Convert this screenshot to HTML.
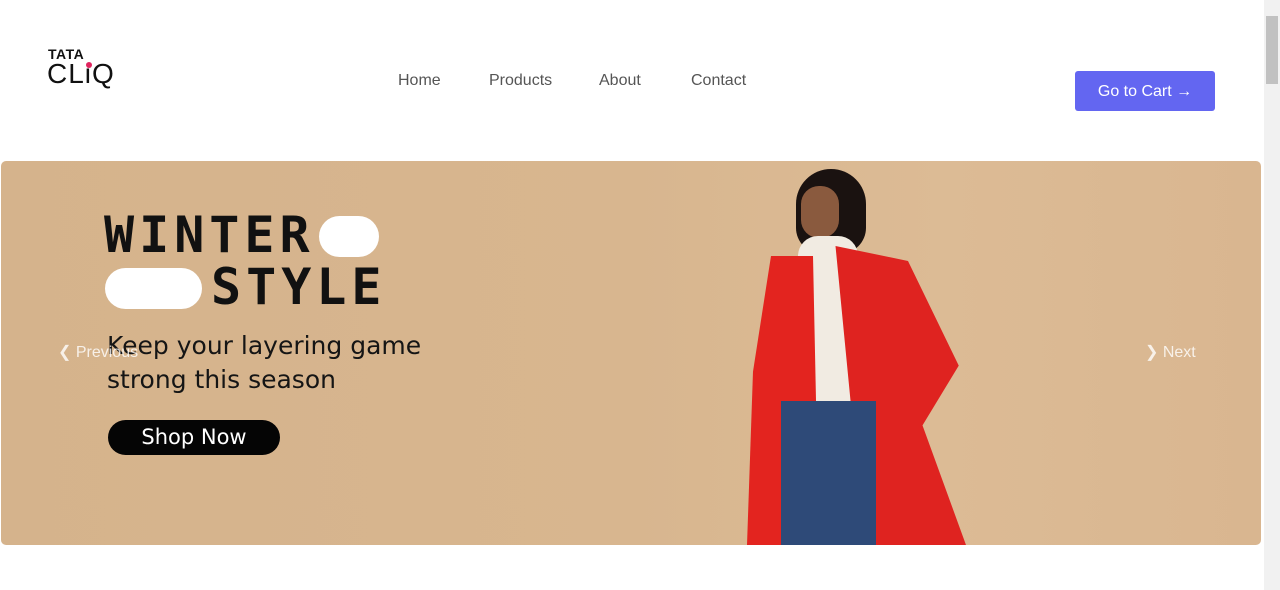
<!DOCTYPE html>
<html><head><style>
body{margin:0;width:1280px;height:590px;overflow:hidden;background:#fff;font-family:"Liberation Sans",sans-serif;position:relative}
.nav a{position:absolute;top:72px;font-size:16px;color:#555;text-decoration:none}
.btn{position:absolute;left:1075px;top:71px;width:140px;height:40px;background:#6366f1;border-radius:3px;color:#fff;font-size:16px;line-height:42px;text-align:center}
.banner{position:absolute;left:1px;top:161px;width:1260px;height:384px;border-radius:5px;overflow:hidden;background:linear-gradient(90deg,#d5b38c 0%,#d8b68f 50%,#dcbb95 75%,#d9b690 100%)}
.mono{font-family:"DejaVu Sans Mono","Liberation Mono",monospace;font-weight:bold;color:#111;position:absolute;font-size:50px;letter-spacing:5px}
.pill{position:absolute;background:#fff;border-radius:22px}
.sub{position:absolute;left:106px;top:168px;font-family:"DejaVu Sans",sans-serif;font-size:25px;line-height:34px;color:#151515}
.shop{position:absolute;left:107px;top:259px;width:172px;height:35px;border-radius:18px;background:#050505;color:#fff;font-family:"DejaVu Sans",sans-serif;font-size:21px;line-height:35px;text-align:center}
.ctl{position:absolute;top:181px;color:rgba(255,255,255,.8);font-size:16px}
.sb{position:absolute;right:0;top:0;width:16px;height:590px;background:#f1f1f1}
.sb div{position:absolute;left:2px;top:16px;width:12px;height:68px;background:#c1c1c1}
</style></head><body>
<div style="position:absolute;left:48px;top:46px;font-weight:900;font-size:14px;letter-spacing:.5px;color:#111">TATA</div>
<div style="position:absolute;left:47px;top:58px;font-size:28px;color:#111;letter-spacing:1px">CLiQ</div>
<div style="position:absolute;left:86px;top:62px;width:6px;height:6px;border-radius:50%;background:#e0245e"></div>
<div class="nav"><a style="left:398px">Home</a><a style="left:489px">Products</a><a style="left:599px">About</a><a style="left:691px">Contact</a></div>
<div class="btn">Go to Cart →</div>
<div class="banner">
 <div class="mono" style="left:103px;top:45px">WINTER</div>
 <div class="pill" style="left:318px;top:55px;width:60px;height:41px"></div>
 <div class="pill" style="left:104px;top:107px;width:97px;height:41px"></div>
 <div class="mono" style="left:210px;top:97px">STYLE</div>
 <div class="sub">Keep your layering game<br>strong this season</div>
 <div class="shop">Shop Now</div>
 <div class="ctl" style="left:57px">❮ Previous</div>
 <div class="ctl" style="left:1144px">❯ Next</div>
 <div style="position:absolute;left:795px;top:8px;width:70px;height:85px;border-radius:40px 40px 30px 30px;background:#1a1210"></div>
 <div style="position:absolute;left:800px;top:25px;width:38px;height:52px;border-radius:18px;background:#8a5a3e"></div>
 <div style="position:absolute;left:797px;top:75px;width:60px;height:170px;border-radius:20px;background:#f1ebe2"></div>
 <div style="position:absolute;left:746px;top:95px;width:120px;height:289px;background:#e3241f;clip-path:polygon(20% 0,55% 0,60% 100%,0 100%,5% 40%)"></div>
 <div style="position:absolute;left:820px;top:85px;width:145px;height:299px;background:#df2320;clip-path:polygon(10% 0,60% 5%,95% 40%,70% 60%,100% 100%,30% 100%,20% 50%)"></div>
 <div style="position:absolute;left:780px;top:240px;width:95px;height:144px;background:#2e4a78"></div>
</div>
<div class="sb"><div></div></div>
</body></html>
